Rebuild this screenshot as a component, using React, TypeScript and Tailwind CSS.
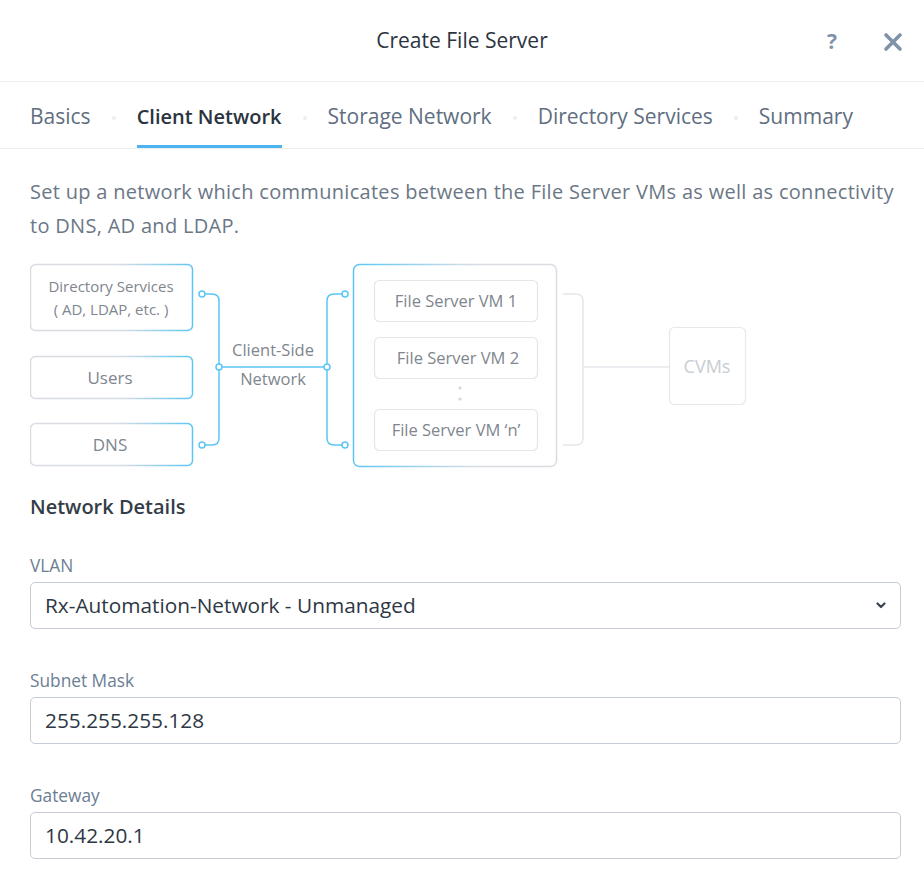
import React from 'react';

const font = { fontFamily: '"Open Sans", "Liberation Sans", sans-serif' };

const tabs = ['Basics', 'Client Network', 'Storage Network', 'Directory Services', 'Summary'];

// Client-side network diagram, drawn in page coordinates (viewBox offset)
const NetworkDiagram: React.FC = () => {
  const blue = '#5bc6f4';
  const gray = '#d9dde2';
  const txt = '#80868e';
  return (
    <svg width="730" height="210" viewBox="30 262 730 210" className="block" style={font}>
      <defs>
        <linearGradient id="toBlue" x1="0" y1="0" x2="1" y2="0">
          <stop offset="0.55" stopColor={gray} />
          <stop offset="1" stopColor={blue} />
        </linearGradient>
        <linearGradient id="toGray" x1="0" y1="0" x2="1" y2="0">
          <stop offset="0" stopColor={blue} />
          <stop offset="0.6" stopColor={gray} />
        </linearGradient>
      </defs>

      {/* left boxes */}
      <rect x="30.5" y="265.5" width="162" height="66" rx="5" fill="#fff" stroke="url(#toBlue)" strokeWidth="1.5" />
      <text x="111" y="293" textAnchor="middle" fontSize="15" fill={txt}>Directory Services</text>
      <text x="111" y="316" textAnchor="middle" fontSize="15" fill={txt}>( AD, LDAP, etc. )</text>

      <rect x="30.5" y="357.5" width="162" height="42" rx="5" fill="#fff" stroke="url(#toBlue)" strokeWidth="1.5" />
      <text x="110" y="384.5" textAnchor="middle" fontSize="17" fill={txt}>Users</text>

      <rect x="30.5" y="424.5" width="162" height="42" rx="5" fill="#fff" stroke="url(#toBlue)" strokeWidth="1.5" />
      <text x="110" y="451.5" textAnchor="middle" fontSize="17" fill={txt}>DNS</text>

      {/* left connector */}
      <g fill="none" stroke={blue} strokeWidth="1.5">
        <path d="M205 295 H212 Q219 295 219 302 V439 Q219 446 212 446 H205" />
        <path d="M219 368 H327" />
        <path d="M342 295 H334 Q327 295 327 302 V439 Q327 446 334 446 H342" />
      </g>
      <g fill="#fff" stroke={blue} strokeWidth="1.5">
        <circle cx="202" cy="295" r="3" />
        <circle cx="202" cy="446" r="3" />
        <circle cx="219" cy="368" r="3" />
        <circle cx="327" cy="368" r="3" />
        <circle cx="345" cy="295" r="3" />
        <circle cx="345" cy="446" r="3" />
      </g>
      <text x="273" y="357" textAnchor="middle" fontSize="16.5" fill={txt}>Client-Side</text>
      <text x="273" y="386" textAnchor="middle" fontSize="16.5" fill={txt}>Network</text>

      {/* file server VM group */}
      <rect x="353.5" y="265.5" width="203" height="202" rx="6" fill="#fff" stroke="url(#toGray)" strokeWidth="1.5" />
      <rect x="374.5" y="281.5" width="163" height="41" rx="5" fill="#fff" stroke="#e3e6ea" strokeWidth="1.2" />
      <text x="456" y="308" textAnchor="middle" fontSize="16.5" fill={txt}>File Server VM 1</text>
      <rect x="374.5" y="338.5" width="163" height="41" rx="5" fill="#fff" stroke="#e3e6ea" strokeWidth="1.2" />
      <text x="458" y="365" textAnchor="middle" fontSize="16.5" fill={txt}>File Server VM 2</text>
      <circle cx="460" cy="389" r="1.6" fill="#d3d7dc" />
      <circle cx="460" cy="400" r="1.6" fill="#d3d7dc" />
      <rect x="374.5" y="410.5" width="163" height="41" rx="5" fill="#fff" stroke="#e3e6ea" strokeWidth="1.2" />
      <text x="456" y="437" textAnchor="middle" fontSize="16.5" fill={txt}>File Server VM ‘n’</text>

      {/* bracket to CVMs */}
      <g fill="none" stroke="#e4e7eb" strokeWidth="1.5">
        <path d="M563 295 H576 Q583 295 583 302 V439 Q583 446 576 446 H563" />
        <path d="M583 368 H669" />
      </g>
      <rect x="669.5" y="328.5" width="76" height="77" rx="5" fill="#fff" stroke="#e6e9ec" strokeWidth="1.2" />
      <text x="707" y="374" textAnchor="middle" fontSize="18" fill="#c9cdd2">CVMs</text>
    </svg>
  );
};

const Field: React.FC<{ label: string; value: string; select?: boolean; className?: string }> = ({ label, value, select, className }) => (
  <div className={className}>
    <div className="text-[17.3px] leading-[20px] text-[#6c7e93]">{label}</div>
    <div className="mt-[6px] h-[47px] flex items-center justify-between rounded-[5px] border-[1.5px] border-[#c6ccd4] bg-white pl-[14px] pr-[14px]">
      <span className="text-[20.8px] text-[#2e3744]">{value}</span>
      {select && (
        <svg width="10" height="7" viewBox="0 0 10 7" fill="none" stroke="#3a4350" strokeWidth="2.2" strokeLinecap="round" strokeLinejoin="round">
          <path d="M1.5 1.5 L5 5 L8.5 1.5" />
        </svg>
      )}
    </div>
  </div>
);

export default function App() {
  return (
    <div className="w-[924px] h-[879px] bg-white overflow-hidden" style={font}>
      {/* Header */}
      <div className="relative h-[82px] border-b-[1.5px] border-[#eceef1] flex items-center justify-center">
        <h1 className="text-[21px] text-[#2b3440]">Create File Server</h1>
        <div className="absolute right-[21px] top-[31px] flex items-center gap-[46px]">
          <span className="text-[21px] font-bold text-[#7f93a8] leading-none">?</span>
          <svg width="20" height="20" viewBox="0 0 20 20" stroke="#7f93a8" strokeWidth="3.6" strokeLinecap="round">
            <path d="M3 3 L17 17 M17 3 L3 17" />
          </svg>
        </div>
      </div>

      {/* Tabs */}
      <div className="h-[67px] border-b-[1.5px] border-[#eceef1] flex items-stretch pl-[30px]">
        {tabs.map((t, i) => (
          <React.Fragment key={t}>
            {i > 0 && (
              <div className="w-[46px] flex items-center justify-center pt-[6px]">
                <span className="w-[4px] h-[4px] rounded-full bg-[#eceef1]" />
              </div>
            )}
            <div
              className={`flex items-center pt-[6px] border-b-[3px] ${
                t === 'Client Network'
                  ? 'border-[#4db4f0] text-[#2b3440] text-[20px] font-semibold'
                  : 'border-transparent text-[#5f6e80] text-[21px]'
              }`}
            >
              {t}
            </div>
          </React.Fragment>
        ))}
      </div>

      <div className="pl-[30px] pr-[23px]">
        <p className="pt-[26px] text-[20px] leading-[34px] tracking-[0.3px] text-[#6b7785]">
          Set up a network which communicates between the File Server VMs as well as connectivity to DNS, AD and LDAP.
        </p>

        <div className="mt-[18px]">
          <NetworkDiagram />
        </div>

        <h2 className="mt-[24px] text-[20px] leading-[24px] font-semibold text-[#343d48]">Network Details</h2>

        <Field className="mt-[37px]" label="VLAN" value="Rx-Automation-Network - Unmanaged" select />
        <Field className="mt-[42px]" label="Subnet Mask" value="255.255.255.128" />
        <Field className="mt-[42px]" label="Gateway" value="10.42.20.1" />
      </div>
    </div>
  );
}
